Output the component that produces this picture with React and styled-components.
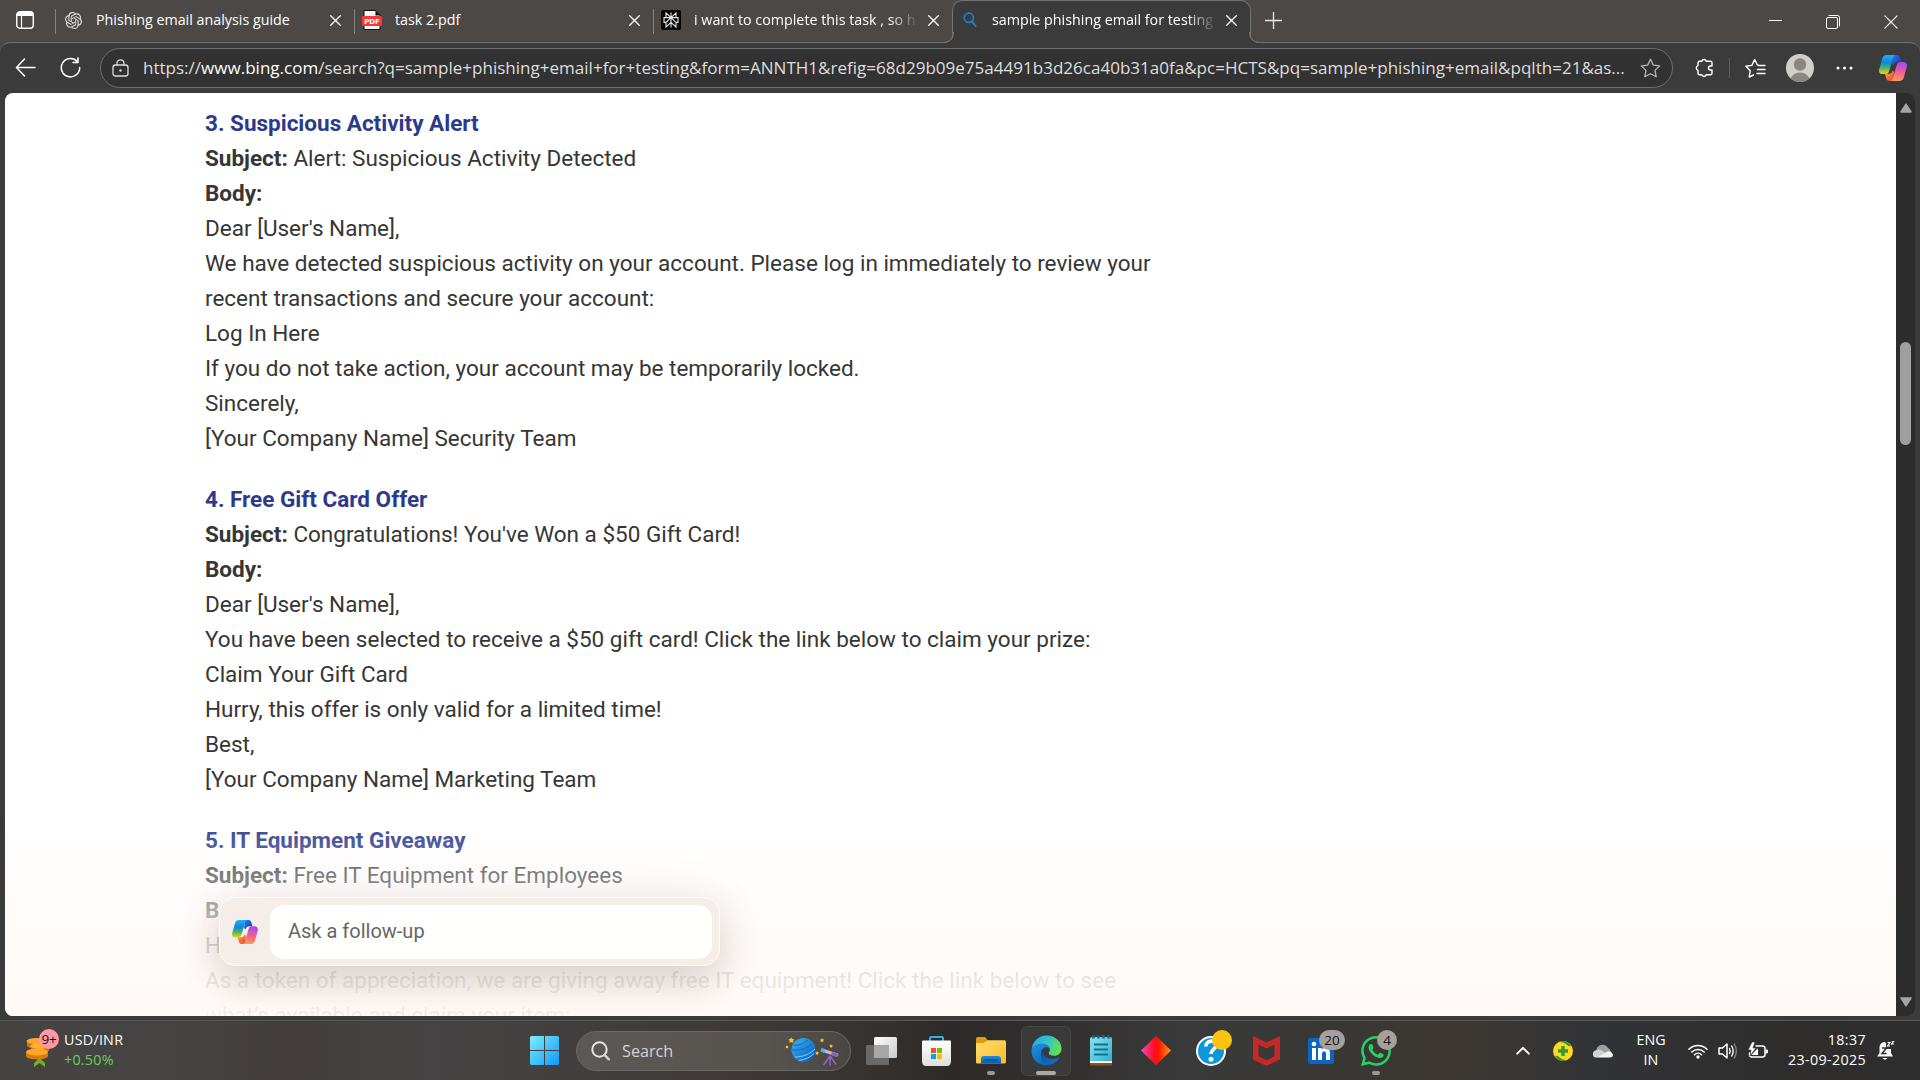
import React from "react";
import styled, { createGlobalStyle, css } from "styled-components";

const ui = `"Open Sans", "Noto Sans", sans-serif`;

const Global = createGlobalStyle`
  * { box-sizing: border-box; }
  html, body { margin: 0; padding: 0; overflow: hidden; background: #3b3b3b; }
  svg { display: block; flex: none; }
`;

/* ---------- window chrome ---------- */
const Screen = styled.div`
  width: 1920px;
  height: 1080px;
  display: flex;
  flex-direction: column;
  overflow: hidden;
  background: #4b4845;
  font-family: ${ui};
  color: #fff;
`;

const TabStrip = styled.div`
  height: 42px;
  flex: none;
  display: flex;
  position: relative;
  z-index: 1;
`;

const TabMenu = styled.div`
  width: 55px;
  display: flex;
  align-items: center;
  padding: 0 0 2px 16px;
`;

const Tab = styled.div`
  width: 299px;
  display: flex;
  align-items: center;
  padding: 0 0 2px 7px;
  position: relative;
  ${(p) =>
    !p.$active &&
    css`
      &::before {
        content: "";
        position: absolute;
        left: 0;
        top: 9px;
        width: 1px;
        height: 25px;
        background: #85827f;
      }
    `}
  ${(p) =>
    p.$active &&
    css`
      height: 43px;
      padding: 0 0 4px 6px;
      background: #3b3b3b;
      border: 1px solid #737373;
      border-bottom: 0;
      border-radius: 10px 10px 0 0;
      &::before,
      &::after {
        content: "";
        position: absolute;
        bottom: 0;
        width: 10px;
        height: 10px;
        background: transparent;
        border-bottom: 1px solid #737373;
      }
      &::before {
        left: -10px;
        border-right: 1px solid #737373;
        border-bottom-right-radius: 10px;
        box-shadow: 4px 3px 0 #3b3b3b;
      }
      &::after {
        right: -10px;
        border-left: 1px solid #737373;
        border-bottom-left-radius: 10px;
        box-shadow: -4px 3px 0 #3b3b3b;
      }
    `}
`;

const Favicon = styled.div`
  width: 22px;
  display: flex;
  justify-content: center;
`;

const TabTitle = styled.div`
  width: 222px;
  margin-left: ${(p) => p.$gap}px;
  font-size: 14.3px;
  line-height: 20px;
  white-space: nowrap;
  overflow: hidden;
  mask-image: ${(p) => (p.$fade ? "linear-gradient(90deg, #000 195px, transparent 225px)" : "none")};
`;

const TabClose = styled.div`
  width: 20px;
  margin-left: 7px;
  display: flex;
  justify-content: center;
`;

const NewTab = styled.div`
  padding: 12px 0 0 14px;
`;

const WindowControls = styled.div`
  margin-left: auto;
  display: flex;
  align-items: center;
  gap: 44px;
  padding: 1px 22px 0 0;
`;

const Toolbar = styled.div`
  height: 51px;
  flex: none;
  display: flex;
  align-items: center;
  padding: 0 13px 1px 15px;
  background: #3b3b3b;
  border-top: 1px solid #737373;
  border-radius: 10px 10px 0 0;
`;

const NavButtons = styled.div`
  width: 85px;
  display: flex;
  align-items: center;
  gap: 24px;
`;

const AddressBar = styled.div`
  width: 1573px;
  height: 40px;
  display: flex;
  align-items: center;
  padding: 0 11px 0 11px;
  border: 1px solid #6e6e6e;
  border-radius: 20px;
  background: #323232;
`;

const Url = styled.div`
  margin-left: 14px;
  flex: 1;
  white-space: nowrap;
  font-size: 17.04px;
  line-height: 24px;
  color: #dedede;
  b { font-weight: 400; color: #fff; }
`;

const ToolbarActions = styled.div`
  margin-left: auto;
  display: flex;
  align-items: center;
`;

const Slot = styled.div`
  margin-left: ${(p) => p.$gap}px;
`;

const Divider = styled.div`
  width: 1px;
  height: 20px;
  margin-left: 15px;
  background: #5e5e5e;
`;

/* ---------- page ---------- */
const Frame = styled.div`
  height: 927px;
  flex: none;
  display: flex;
  padding: 0 5px 4px 5px;
  background: #3b3b3b;
`;

const Page = styled.main`
  width: 1891px;
  position: relative;
  overflow: hidden;
  background: #fff;
  border-radius: 8px 0 0 8px;
  padding: 13px 0 0 200px;
  font-family: Roboto, "Liberation Sans", sans-serif;
`;

const Mail = styled.section`
  margin-bottom: 26px;
  width: 1000px;
`;

const MailTitle = styled.h3`
  margin: 0;
  font-size: 22.5px;
  line-height: 35px;
  font-weight: 700;
  color: #2b3a8c;
`;

const Line = styled.p`
  margin: 0;
  height: 35px;
  font-size: 22.5px;
  line-height: 35px;
  white-space: nowrap;
  color: #363636;
`;

const Fade = styled.div`
  position: absolute;
  left: 0;
  right: 0;
  bottom: 0;
  height: 205px;
  background: linear-gradient(
    180deg,
    rgba(255, 253, 252, 0) 0%,
    rgba(255, 252, 250, 0.15) 14%,
    rgba(255, 252, 250, 0.36) 31%,
    rgba(255, 251, 249, 0.6) 46%,
    rgba(255, 250, 247, 0.78) 62%,
    rgba(255, 250, 247, 0.89) 82%,
    rgba(255, 250, 247, 0.94) 100%
  );
`;

const AskBox = styled.div`
  position: absolute;
  left: 214px;
  top: 804px;
  width: 501px;
  height: 69px;
  display: flex;
  align-items: center;
  padding: 0 7px 0 12px;
  border: 1px solid #fffdfb;
  border-radius: 17px;
  background: #f5eee8;
  box-shadow: 0 16px 38px rgba(60, 35, 25, 0.17), 0 0 56px rgba(60, 40, 20, 0.06);
`;

const AskInput = styled.div`
  flex: 1;
  height: 54px;
  margin-left: 12px;
  padding-left: 18px;
  border-radius: 14px;
  background: #fffffe;
  font-size: 20px;
  line-height: 53px;
  color: #666;
`;

const ScrollTrack = styled.div`
  width: 19px;
  display: flex;
  flex-direction: column;
  align-items: center;
  background: #2c2c2c;
  border-radius: 0 8px 8px 0;
  padding: 10px 0 9px;
`;

const ScrollThumb = styled.div`
  width: 11px;
  height: 103px;
  margin: 229px 0 auto;
  border-radius: 6px;
  background: #9f9f9f;
`;

/* ---------- taskbar ---------- */
const TaskBar = styled.footer`
  height: 60px;
  flex: none;
  display: flex;
  align-items: center;
  border-top: 1px solid #5a5857;
  background: linear-gradient(90deg, #454342 0, #464342 160px, #433e3b 290px, #454343 430px, #3f3a37 720px, #383431 850px, #2e2a29 950px, #302d2c 1030px, #3a3a3a 1180px, #393734 1350px, #3d3833 1450px, #323336 1590px, #2e2d2c 1800px, #2f2e2e 1920px);
`;

const Widget = styled.div`
  width: 519px;
  display: flex;
  align-items: center;
  padding: 0 0 2px 26px;
`;

const WidgetText = styled.div`
  margin-left: 4px;
  font-size: 14.3px;
  line-height: 20px;
  letter-spacing: 0.25px;
  white-space: nowrap;
`;

const Gain = styled.div`
  color: #6ccb5f;
`;

const Apps = styled.div`
  display: flex;
  align-items: center;
  gap: 5px;
`;

const AppButton = styled.div`
  width: 50px;
  height: 50px;
  position: relative;
  display: flex;
  align-items: center;
  justify-content: center;
  border-radius: 6px;
  border: 1px solid ${(p) => (p.$active ? "#484747" : "transparent")};
  background: ${(p) => (p.$active ? "#3b3a3a" : "transparent")};
  ${(p) =>
    p.$running &&
    css`
      &::after {
        content: "";
        position: absolute;
        bottom: 0;
        left: calc(50% - ${p.$running / 2}px);
        width: ${p.$running}px;
        height: 4px;
        border-radius: 2px;
        background: ${p.$running > 10 ? "#a9a8a6" : "#9a9997"};
      }
    `}
`;

const SearchBox = styled.div`
  width: 275px;
  height: 40px;
  margin: 0 0 0 2px;
  display: flex;
  align-items: center;
  padding: 0 9px 0 14px;
  border: 1px solid #6b6765;
  border-radius: 20px;
  background: linear-gradient(90deg, #5c5855, #57534f 70%, #4a4643);
`;

const SearchLabel = styled.div`
  margin-left: 12px;
  flex: 1;
  font-size: 16.2px;
  line-height: 22px;
  color: #d6d3d0;
`;

const Badge = styled.div`
  position: absolute;
  top: 3px;
  left: ${(p) => p.$left}px;
  width: ${(p) => p.$w || 20}px;
  height: 20px;
  border-radius: 10px;
  background: ${(p) => p.$bg || "#a3a09d"};
  color: #111;
  font-size: 13.5px;
  line-height: 20px;
  text-align: center;
`;

const CoinWrap = styled.div`
  position: relative;
  width: 34px;
  height: 38px;
`;

const CoinBadge = styled(Badge)`
  top: -2px;
  left: 13px;
  letter-spacing: -0.3px;
`;

const Tray = styled.div`
  margin-left: auto;
  display: flex;
  align-items: center;
  padding-right: 25px;
`;

const TrayText = styled.div`
  width: ${(p) => p.$w}px;
  margin: 0 0 2px ${(p) => p.$gap}px;
  text-align: ${(p) => p.$align};
  font-size: 14.3px;
  line-height: 20px;
  letter-spacing: ${(p) => p.$ls || 0}px;
  white-space: nowrap;
`;

/* ---------- icons ---------- */
const stroke = { fill: "none", stroke: "#fff", strokeLinecap: "round", strokeLinejoin: "round" };

const CloseX = ({ s = 11, w = 1.3 }) => (
  <svg width={s} height={s} viewBox="0 0 11 11"><path d="M.7.7l9.6 9.6M10.3.7L.7 10.3" {...stroke} strokeWidth={w} /></svg>
);

const OpenAi = () => (
  <svg width="17" height="17" viewBox="0 0 24 24">
    <path fill="#e6e6e6" d="M22.28 9.82a5.98 5.98 0 0 0-.52-4.91 6.05 6.05 0 0 0-6.51-2.9A6.07 6.07 0 0 0 4.98 4.18a5.98 5.98 0 0 0-4 2.9 6.05 6.05 0 0 0 .75 7.1 5.98 5.98 0 0 0 .51 4.91 6.05 6.05 0 0 0 6.52 2.9A5.98 5.98 0 0 0 13.26 24a6.06 6.06 0 0 0 5.77-4.21 5.99 5.99 0 0 0 4-2.9 6.06 6.06 0 0 0-.75-7.07zm-9.02 12.61a4.48 4.48 0 0 1-2.88-1.04l.14-.08 4.78-2.76a.8.8 0 0 0 .39-.68v-6.74l2.02 1.17a.07.07 0 0 1 .04.05v5.58a4.5 4.5 0 0 1-4.49 4.5zm-9.66-4.13a4.47 4.47 0 0 1-.54-3.01l.14.08 4.78 2.76a.77.77 0 0 0 .78 0l5.84-3.37v2.33a.08.08 0 0 1-.03.06L9.74 19.95a4.5 4.5 0 0 1-6.14-1.65zM2.34 7.9a4.49 4.49 0 0 1 2.37-1.98v5.68a.77.77 0 0 0 .39.68l5.81 3.35-2.02 1.17a.08.08 0 0 1-.07 0l-4.83-2.79A4.5 4.5 0 0 1 2.34 7.9zm16.6 3.86L13.1 8.36l2.02-1.16a.08.08 0 0 1 .07 0l4.83 2.79a4.49 4.49 0 0 1-.68 8.1v-5.68a.79.79 0 0 0-.4-.66zm2.01-3.02l-.14-.09-4.77-2.78a.78.78 0 0 0-.79 0L9.41 9.23V6.9a.07.07 0 0 1 .03-.06l4.83-2.79a4.5 4.5 0 0 1 6.68 4.66zM8.31 12.86l-2.02-1.16a.08.08 0 0 1-.04-.06V6.07a4.5 4.5 0 0 1 7.38-3.45l-.14.08-4.78 2.76a.8.8 0 0 0-.39.68zm1.1-2.37l2.6-1.5 2.6 1.5v3l-2.6 1.5-2.6-1.5z" />
  </svg>
);

const PdfIcon = () => (
  <svg width="20" height="20" viewBox="0 0 20 20">
    <path d="M2 .5h12l4 4.5v14.5H2z" fill="#f5f5f5" stroke="#111" />
    <path d="M13.5.5L18 5.5h-4.5z" fill="#111" />
    <rect x="0" y="6" width="20" height="10" rx="1" fill="#f5393b" />
    <text x="10" y="13.6" textAnchor="middle" fontFamily="DejaVu Sans" fontWeight="700" fontSize="7" fill="#fff">PDF</text>
  </svg>
);

const Perplexity = () => (
  <svg width="20" height="20" viewBox="0 0 20 20">
    <rect width="20" height="20" rx="2" fill="#050505" />
    <path d="M10 2.5v15M5 3l5 4.6L15 3v4.6H5zM10 7.6l-5 4.8V17l5-4.6M10 7.6l5 4.8V17l-5-4.6M5 12.4H3V7.6h14v4.8h-2" fill="none" stroke="#e8e8e8" strokeWidth="1.1" />
  </svg>
);

const BlueSearch = () => (
  <svg width="14" height="16" viewBox="0 0 14 16"><circle cx="5.8" cy="5.8" r="4.6" fill="none" stroke="#1c7cd6" strokeWidth="1.7" /><path d="M8.900 9.300l3.700 4.700" stroke="#1c7cd6" strokeWidth="2" strokeLinecap="round" /></svg>
);

const Copilot = ({ w, h, id }) => (
  <svg width={w} height={h} viewBox="0 0 28 26">
    <defs>
      <linearGradient id={`${id}a`} x1="0" y1="0" x2="0" y2="1"><stop offset="0" stopColor="#1fb0f5" /><stop offset=".4" stopColor="#1584dc" /><stop offset=".68" stopColor="#45b56a" /><stop offset="1" stopColor="#ffd400" /></linearGradient>
      <linearGradient id={`${id}b`} x1=".2" y1="0" x2=".1" y2="1"><stop offset="0" stopColor="#a44cf0" /><stop offset=".45" stopColor="#ee5a9c" /><stop offset="1" stopColor="#ffa24a" /></linearGradient>
      <linearGradient id={`${id}c`} x1="0" y1="0" x2="1" y2="1"><stop offset="0" stopColor="#1a7ef0" /><stop offset="1" stopColor="#1b35b8" /></linearGradient>
      <linearGradient id={`${id}d`} x1="0" y1="0" x2="1" y2="1"><stop offset="0" stopColor="#ffb224" /><stop offset="1" stopColor="#e83a4c" /></linearGradient>
    </defs>
    <path d="M14 0h3.500c2.200 0 3 1.300 3.600 3.200l1 3.600h-3.400c-2.400 0-3.400 1.200-4 3.300L13 9z" fill={`url(#${id}c)`} />
    <path d="M14 26h-3.400c-2.200 0-3-1.300-3.600-3.200L6 18.800h4c2.300 0 3-1.400 3.600-3.300L15 17z" fill={`url(#${id}d)`} />
    <path d="M7.600 0h9.200c-1.700.3-2.300 1.700-2.800 3.300l-3.600 12.200c-.7 2.300-1.600 3.600-4 3.600H3.600C.8 19.100-.5 17 .2 14.200L3.100 3.700C3.900 1 5.300 0 7.600 0z" fill={`url(#${id}a)`} />
    <path d="M20.400 26h-9.200c1.700-.3 2.300-1.700 2.800-3.300l3.600-12.200c.7-2.300 1.600-3.600 4-3.600h2.800c2.800 0 4.100 2.100 3.400 4.900l-2.900 10.500c-.8 2.700-2.200 3.700-4.500 3.700z" fill={`url(#${id}b)`} />
  </svg>
);

const Edge = () => (
  <svg width="31" height="31" viewBox="0 0 31 31">
    <defs>
      <linearGradient id="eg1" x1="0" y1=".2" x2="1" y2=".5"><stop offset="0" stopColor="#2aa8e8" /><stop offset=".5" stopColor="#2fc4c9" /><stop offset="1" stopColor="#66e04f" /></linearGradient>
      <linearGradient id="eg2" x1="0" y1="0" x2=".6" y2="1"><stop offset="0" stopColor="#1f93df" /><stop offset="1" stopColor="#0a66bd" /></linearGradient>
      <linearGradient id="eg3" x1="0" y1="0" x2="1" y2="1"><stop offset="0" stopColor="#0b4c94" /><stop offset="1" stopColor="#1179cf" /></linearGradient>
    </defs>
    <path d="M.7 14C1.700 6 8 .5 15.500.5 24 .5 30.500 6.500 30.500 13.500c0 4.600-3.300 7.300-7.200 7.300-3.600 0-5.600-1.400-5.600-2.600 0-.9 1.200-1.300 1.200-3.600 0-3.200-3.300-5.600-7.600-5.600C6.500 9 2.600 11 .7 14z" fill="url(#eg1)" />
    <path d="M.6 15C1.800 11.200 6 8.800 10.800 8.800c4.500 0 7.900 2.500 8 5.500-1-1.600-2.500-2-3.600-2-3 0-5 2.500-5 6.200 0 6 5 9.800 9.300 11-9.800 3.300-20-4-18.900-14.500z" fill="url(#eg2)" />
    <path d="M10.700 16c-1.700 3.600-.7 8.400 2.400 11.300 2.600 2.500 5.400 2.900 7.500 2 3.200-1.100 5.900-3.300 7.600-6 .4-.7-.2-1.100-.8-.8-6.600 3.200-14.400.7-15.400-5-.1-.7-.4-1.700-1.300-1.500z" fill="url(#eg3)" />
  </svg>
);

const Planet = () => (
  <svg width="56" height="30" viewBox="0 0 56 30">
    <defs><linearGradient id="pl" x1="0" y1="0" x2="1" y2="1"><stop offset="0" stopColor="#35b4f5" /><stop offset="1" stopColor="#0a5bb8" /></linearGradient></defs>
    <circle cx="18.500" cy="14" r="12" fill="url(#pl)" />
    <path d="M8 9c5 1 10-1 15-5M7 14c8 1 15-2 20-6" stroke="#1468bd" strokeWidth="1" fill="none" />
    <path d="M10 21c8 0 15-3 20-8M14 24.500c6-1 11-3 15-7" stroke="#7fd0fb" strokeWidth="1" fill="none" />
    <path d="M6 1.500l1.400 1.600 2 .2-1.300 1.500.4 2.100L6.400 6l-2 .9.300-2.100L3.400 3.200l1.900-.2zM37 2l.8 1.300 1.500.5-1.200 1 .1 1.600-1.300-.8-1.500.6.4-1.500-1-1.200 1.600-.1zM32 15l.9 1.300 1.200.3-.9 1-.1 1.400-1.200-.7-1.300.5.3-1.400-.7-1 1.300-.1zM46 8l.7 1.200 1.300.4-.9.9v1.400l-1.200-.8-1.200.4.400-1.300-.8-1 1.200-.1z" fill="#f9c623" />
    <circle cx="2" cy="11" r="1.300" fill="#f9c623" />
    <path d="M37.500 12.500l16 5.300-1.300 3.200-15.700-5.600z" fill="#c3b2d8" /><path d="M36.500 12l4 1.400-1.200 3.500-3.800-1.400z" fill="#4db4ee" /><path d="M47 16l6 2-1 3-6-2z" fill="#8264b8" />
    <path d="M45 20l-6.500 9M45 20v9.500M45 20l6 8.500" stroke="#9268c8" strokeWidth="1.400" />
  </svg>
);

const Ico = {
  tabs: <svg width="18" height="18" viewBox="0 0 18 18"><rect x=".75" y=".75" width="16.500" height="16.500" rx="3" {...stroke} strokeWidth="1.400" /><path d="M1 3.500C1 1.500 2 1 3.500 1h11C16 1 17 1.500 17 3.500V5H1z" fill="#fff" /><path d="M5.500 5v12" stroke="#fff" strokeWidth="1.200" /></svg>,
  back: <svg width="21" height="19" viewBox="0 0 21 19"><path d="M9.500 1L1.500 9.500l8 8.500M1.500 9.500H20" {...stroke} strokeWidth="1.500" /></svg>,
  reload: <svg width="21" height="21" viewBox="0 0 21 21"><path d="M17.300 4.500A9.200 9.200 0 1 0 19.700 10.500M18 .8v4.700h-5" {...stroke} strokeWidth="1.500" /></svg>,
  lock: <svg width="17" height="18" viewBox="0 0 17 18"><rect x="1" y="6" width="15" height="11" rx="2.500" {...stroke} stroke="#ddd" strokeWidth="1.300" /><path d="M5 6V4.300a3.500 3.500 0 0 1 7 0V6" {...stroke} stroke="#ddd" strokeWidth="1.300" /><circle cx="8.500" cy="11.500" r="1.200" fill="#ddd" /></svg>,
  star: <svg width="21" height="20" viewBox="0 0 21 20"><path d="M10.500 1.200l2.800 5.900 6.400.8-4.700 4.500 1.200 6.400-5.700-3.100-5.700 3.100L6 12.400 1.300 7.900l6.400-.8z" {...stroke} stroke="#b5b5b5" strokeWidth="1.300" /></svg>,
  puzzle: <svg width="20" height="20" viewBox="0 0 20 20"><path d="M5.500 3.200h2.300a2.300 2.300 0 0 1 4.400 0h4.300q1.500 0 1.500 1.500V8h-1.500a2 2 0 0 0 0 4H18v3.300q0 1.500-1.500 1.500h-4.300a2.300 2.300 0 0 1-4.400 0H5.500q-1.500 0-1.500-1.500v-3a2.400 2.400 0 0 1 0-4.600v-3q0-1.500 1.500-1.500z" {...stroke} strokeWidth="1.400" /></svg>,
  favs: <svg width="21" height="20" viewBox="0 0 21 20"><path d="M8.500 17l-4.300 2 1-6.300L.9 8.300l6-.9L9.600 1.500l2.700 5.300L14 7.500H20M12.500 11.500H20M12 15.500h8" {...stroke} strokeWidth="1.400" /></svg>,
  avatar: <svg width="28" height="28" viewBox="0 0 28 28"><defs><clipPath id="av"><circle cx="14" cy="14" r="14" /></clipPath></defs><g clipPath="url(#av)"><rect width="28" height="28" fill="#d1cfcc" /><circle cx="14" cy="10.500" r="6.200" fill="#8b8682" /><ellipse cx="14" cy="26" rx="9.500" ry="7.500" fill="#8b8682" /></g></svg>,
  dots: <svg width="17" height="4" viewBox="0 0 17 4"><circle cx="2" cy="2" r="1.500" fill="#fff" /><circle cx="8.500" cy="2" r="1.500" fill="#fff" /><circle cx="15" cy="2" r="1.500" fill="#fff" /></svg>,
  plus: <svg width="17" height="17" viewBox="0 0 17 17"><path d="M8.500 0v17M0 8.500h17" stroke="#e8e8e8" strokeWidth="1.300" /></svg>,
  min: <svg width="13" height="13" viewBox="0 0 13 13"><path d="M0 5.500h13" stroke="#fff" /></svg>,
  max: <svg width="14" height="14" viewBox="0 0 14 14"><rect x=".5" y="2.500" width="11" height="11" rx="1.500" {...stroke} /><path d="M3 .5h8.500q2 0 2 2V11" {...stroke} /></svg>,
  up: <svg width="12" height="10" viewBox="0 0 12 10"><path d="M6 1.200L11 9H1z" fill="#a4a4a4" stroke="#a4a4a4" strokeWidth="1.500" strokeLinejoin="round" /></svg>,
  down: <svg width="12" height="10" viewBox="0 0 12 10"><path d="M6 8.800L1 1h10z" fill="#a4a4a4" stroke="#a4a4a4" strokeWidth="1.500" strokeLinejoin="round" /></svg>,
  start: <svg width="29" height="29" viewBox="0 0 29 29"><defs><linearGradient id="st" gradientUnits="userSpaceOnUse" x1="0" y1="0" x2="29" y2="29"><stop offset="0" stopColor="#7deefc" /><stop offset="1" stopColor="#0f98fb" /></linearGradient></defs><path d="M1 0h13v14H0V1zM15 0h13l1 1v13H15zM0 15h14v14H1l-1-1zM15 15h14v13l-1 1H15z" fill="url(#st)" /></svg>,
  search: <svg width="19" height="20" viewBox="0 0 19 20"><circle cx="8.500" cy="8.500" r="7.200" fill="none" stroke="#e4e4e4" strokeWidth="2" /><path d="M13.500 13.800l4.300 4.500" stroke="#d5d5d5" strokeWidth="2.400" strokeLinecap="round" /></svg>,
  task: <svg width="31" height="28" viewBox="0 0 31 28"><defs><linearGradient id="tv" x1="0" y1="0" x2="1" y2="1"><stop offset="0" stopColor="#fff" /><stop offset="1" stopColor="#c9c9c9" /></linearGradient></defs><rect x="8" y="0" width="23" height="21" rx="1.500" fill="url(#tv)" /><rect x="0" y="8" width="23" height="20" rx="1.500" fill="#747474" opacity=".85" /><rect x="8" y="8" width="15" height="13" fill="#a7a7a7" /></svg>,
  store: <svg width="29" height="30" viewBox="0 0 29 30"><defs><linearGradient id="so" x1="0" y1="0" x2="0" y2="1"><stop offset="0" stopColor="#fff" /><stop offset="1" stopColor="#dedede" /></linearGradient></defs><path d="M8 6V2q0-1 1-1h11q1 0 1 1v4" fill="none" stroke="#2bb3ea" strokeWidth="2" /><path d="M0 5.500q0-1 1-1h27q1 0 1 1V25q0 5-4 5H4q-4 0-4-5z" fill="url(#so)" /><path d="M9 12h5v5H9z" fill="#f25022" /><path d="M15 12h5v5h-5z" fill="#7fba00" /><path d="M9 18h5v5H9z" fill="#00a4ef" /><path d="M15 18h5v5h-5z" fill="#ffb900" /></svg>,
  folder: <svg width="30" height="27" viewBox="0 0 30 27"><defs><linearGradient id="fo" x1="0" y1="0" x2="1" y2="1"><stop offset="0" stopColor="#ffdc73" /><stop offset="1" stopColor="#fcbd24" /></linearGradient><linearGradient id="fb" x1="0" y1="0" x2="0" y2="1"><stop offset="0" stopColor="#1b8ddd" /><stop offset="1" stopColor="#0b5cab" /></linearGradient></defs><path d="M0 1.500Q0 0 1.500 0H9l3 3.500V9H0z" fill="#e09c0b" /><path d="M0 6q4 0 7.500 0L12 3.200h16.500q1.500 0 1.500 1.500V25q0 1.500-1.500 1.500h-27Q0 26.500 0 25z" fill="url(#fo)" /><path d="M5 26.500V22q0-3 3-3h14q3 0 3 3v4.500z" fill="url(#fb)" /><path d="M8.500 23h13" stroke="#0a4a8c" strokeWidth="1.300" /></svg>,
  note: <svg width="22" height="31" viewBox="0 0 22 31"><defs><linearGradient id="no" x1="0" y1="0" x2="1" y2="1"><stop offset="0" stopColor="#8ae2f0" /><stop offset="1" stopColor="#35b0cd" /></linearGradient></defs><path d="M0 27h22v2.500q0 1-1 1H1q-1 0-1-1z" fill="#9a4d15" /><path d="M0 25h22v3H0z" fill="#f5f5f5" /><path d="M0 4q0-2 2-2h18q2 0 2 2v22H0z" fill="url(#no)" /><path d="M3.500 0v3.500M8.500 0v3.500M13.500 0v3.500M18.500 0v3.500" stroke="#116c85" strokeWidth="2.600" /><path d="M4 9.500h14M4 14.500h14M4 19.500h14" stroke="#0e7391" strokeWidth="1.800" /></svg>,
  diamond: <svg width="30" height="29" viewBox="0 0 30 29"><defs><linearGradient id="di"><stop offset="0" stopColor="#ef4fc8" /><stop offset=".45" stopColor="#ff0b1c" /><stop offset=".6" stopColor="#ff1a00" /><stop offset="1" stopColor="#ff9d1a" /></linearGradient></defs><path d="M15 0l15 14.500L15 29 0 14.500z" fill="url(#di)" /></svg>,
  help: <svg width="30" height="30" viewBox="0 0 30 30"><circle cx="15" cy="15" r="14" fill="#0b97dc" stroke="#fff" strokeWidth="2" /><path d="M9.800 10.500c.3-7.500 11-6.500 10.200-.8-.5 3.500-5 4-5 8.300" fill="none" stroke="#fff" strokeWidth="3.600" /><circle cx="15" cy="23.200" r="2.500" fill="#fff" /></svg>,
  mcafee: <svg width="27" height="30" viewBox="0 0 27 30"><path d="M0 0l13.500 6.500L27 0v23.500L13.500 30 0 23.500zM5.500 8.500v11.800l8 4 8-4V8.500l-8 4z" fill="#c62828" fillRule="evenodd" /></svg>,
  linkedin: <svg width="26" height="26" viewBox="0 0 26 26"><rect width="26" height="26" rx="2" fill="#0a66c2" /><path d="M4 10h4v12H4zM10 10h3.700v1.700c2-3.200 8.300-2.600 8.300 3.200V22h-4v-6.300c0-3.500-4-3.200-4 0V22h-4z" fill="#fff" /><circle cx="6" cy="6" r="2.300" fill="#fff" /></svg>,
  whatsapp: <svg width="30" height="30" viewBox="0 0 24 24"><path fill="#25d366" d="M17.470 14.380c-.3-.15-1.760-.87-2.030-.97-.27-.1-.47-.15-.67.15-.2.3-.77.970-.94 1.160-.17.2-.35.220-.64.080-.3-.15-1.260-.46-2.390-1.480-.88-.79-1.480-1.760-1.650-2.060-.17-.3-.02-.46.130-.6.130-.14.300-.35.440-.53.150-.17.200-.3.300-.49.100-.2.050-.37-.03-.52-.07-.15-.66-1.610-.91-2.200-.24-.58-.49-.5-.67-.51l-.57-.01c-.2 0-.52.070-.79.370-.27.300-1.040 1.020-1.040 2.480s1.070 2.880 1.210 3.070c.15.200 2.100 3.200 5.080 4.490.71.300 1.260.49 1.690.62.710.23 1.360.2 1.870.12.570-.08 1.760-.72 2.010-1.410.25-.7.250-1.290.17-1.410-.07-.13-.27-.2-.57-.35m-5.420 7.400h-.004a9.870 9.870 0 0 1-5.030-1.380l-.36-.21-3.740.98 1-3.650-.24-.37a9.860 9.860 0 0 1-1.510-5.260c0-5.450 4.440-9.880 9.890-9.880 2.640 0 5.120 1.030 6.990 2.900a9.830 9.830 0 0 1 2.890 6.990c0 5.450-4.440 9.880-9.880 9.880m8.410-18.300A11.820 11.820 0 0 0 12.050 0C5.500 0 .16 5.340.16 11.890c0 2.100.55 4.140 1.590 5.950L.06 24l6.310-1.650a11.880 11.880 0 0 0 5.680 1.450c6.560 0 11.890-5.340 11.890-11.890a11.820 11.820 0 0 0-3.480-8.410z" /></svg>,
  coins: <svg width="26" height="38" viewBox="0 0 26 38"><g><path d="M1 10.500v4c0 4 18 4 18 0v-4z" fill="#d97b0c" /><ellipse cx="10" cy="10" rx="9.500" ry="3" fill="#ffa52b" /><path d="M5 15v4c0 4 18 4 18 0v-4z" fill="#d6760a" /><ellipse cx="14" cy="15" rx="9.500" ry="3" fill="#ffae35" /><path d="M0 21.500v3.500c0 4.500 22 4.500 22 0v-3.500z" fill="#d97b0c" /><ellipse cx="11" cy="21" rx="11" ry="3.500" fill="#ffa726" /></g><path d="M8 36v-4l5.500-5 5.500 5v4l-5.500-4z" fill="#6fb31c" /></svg>,
  chevron: <svg width="14" height="9" viewBox="0 0 14 9"><path d="M1.200 7.700L7 1.800l5.800 5.900" {...stroke} strokeWidth="1.900" /></svg>,
  shield: <svg width="20" height="20" viewBox="0 0 20 20"><circle cx="10" cy="10" r="10" fill="#ffd91c" /><path d="M6 1Q13-2 18 5q-2 1-4-1-3-3-8-3zM14 19Q7 22 2 15q2-1 4 1 3 3 8 3z" fill="#2f9a2d" /><path d="M8.300 5h3.400v3.300H15v3.400h-3.300V15H8.300v-3.300H5V8.300h3.300z" fill="#2f9a2d" /></svg>,
  cloud: <svg width="20" height="14" viewBox="0 0 20 14"><path d="M4 10a5.700 5.700 0 0 1 11-6 4 4 0 0 1 2 6z" fill="#a0a0a0" /><path d="M3.500 13.500a3.500 3.500 0 0 1 0-7Q6 5 9 7l3 2q5-4 8 1.500 0 3-3 3z" fill="#f4f4f4" /><path d="M3.500 6.500Q7 4.500 10 7.500l2.500 1.600L5 13H3a3.300 3.300 0 0 1 .5-6.500z" fill="#d2d2d2" /></svg>,
  wifi: <svg width="20" height="16" viewBox="0 0 20 16"><path d="M1 6.200a12.700 12.700 0 0 1 18 0M3.800 9a8.800 8.800 0 0 1 12.400 0M6.500 11.700a5 5 0 0 1 7 0" {...stroke} strokeWidth="1.600" /><circle cx="10" cy="14" r="1.700" fill="#fff" /></svg>,
  volume: <svg width="20" height="18" viewBox="0 0 20 18"><path d="M1 6h3.500L9 2v14l-4.500-4H1z" {...stroke} strokeWidth="1.500" /><path d="M11.500 6.500q1.500 2.500 0 5M13.700 4q3 5 0 10" {...stroke} strokeWidth="1.400" /><path d="M16.300 2q4 7 0 14" {...stroke} stroke="#858585" strokeWidth="1.400" /></svg>,
  battery: <svg width="20" height="18" viewBox="0 0 20 18"><path d="M8 4h6.500q2.500 0 2.500 2.500v6q0 2.500-2.500 2.500H4q-2.500 0-2.500-2.500V11" {...stroke} strokeWidth="1.500" /><path d="M10 6.500v6.500H3.500L9 7zM17.500 7.500h1q1.500 0 1.500 1v2q0 1-1.500 1h-1z" fill="#fff" /><path d="M4 0L0 8h3l-1 6 6-8H5l2-6z" fill="#fff" stroke="#303032" strokeWidth=".6" /></svg>,
  bell: <svg width="18" height="20" viewBox="0 0 18 20"><path d="M8 1C4 1 2.500 4 2.500 7v5L0 15.500h16L14 12V8L8 1z" fill="#f5f5f5" /><path d="M5.500 17h5q-2.500 3.500-5 0z" fill="#f5f5f5" /><path d="M9 0h9v8H9z" fill="#303031" /><path d="M10.500 1.500h2.500l-2.500 3.500H13M14.500 0H17l-2.500 3H17" stroke="#fff" strokeWidth="1.100" fill="none" /><path d="M5 7h4.500L5 12.500h4.500" stroke="#303031" strokeWidth="1.500" fill="none" /></svg>,
};

/* ---------- content ---------- */
const mails = [
  { title: "3. Suspicious Activity Alert", subject: "Alert: Suspicious Activity Detected", body: ["Dear [User's Name],", "We have detected suspicious activity on your account. Please log in immediately to review your", "recent transactions and secure your account:", "Log In Here", "If you do not take action, your account may be temporarily locked.", "Sincerely,", "[Your Company Name] Security Team"] },
  { title: "4. Free Gift Card Offer", subject: "Congratulations! You've Won a $50 Gift Card!", body: ["Dear [User's Name],", "You have been selected to receive a $50 gift card! Click the link below to claim your prize:", "Claim Your Gift Card", "Hurry, this offer is only valid for a limited time!", "Best,", "[Your Company Name] Marketing Team"] },
  { title: "5. IT Equipment Giveaway", subject: "Free IT Equipment for Employees", body: ["Hi,", "As a token of appreciation, we are giving away free IT equipment! Click the link below to see", "what’s available and claim your item:"] },
];

const tabs = [
  { icon: <OpenAi />, title: "Phishing email analysis guide", gap: 12 },
  { icon: <PdfIcon />, title: "task 2.pdf", gap: 12 },
  { icon: <Perplexity />, title: "i want to complete this task , so help me", gap: 12, fade: true },
  { icon: <BlueSearch />, title: "sample phishing email for testing", gap: 11, fade: true, active: true },
];

const apps = [
  { icon: Ico.task }, { icon: Ico.store }, { icon: Ico.folder, running: 8 },
  { icon: <Edge />, running: 20, active: true }, { icon: Ico.note }, { icon: Ico.diamond },
  { icon: Ico.help, badge: { $left: 25, $bg: "#ffc20e" } }, { icon: Ico.mcafee },
  { icon: Ico.linkedin, badge: { $left: 22, $w: 26 }, count: "20" },
  { icon: Ico.whatsapp, running: 8, badge: { $left: 25 }, count: "4" },
];

export default function App() {
  return (
    <Screen>
      <Global />
      <TabStrip>
        <TabMenu>{Ico.tabs}</TabMenu>
        {tabs.map((t) => (
          <Tab key={t.title} $active={t.active}>
            <Favicon>{t.icon}</Favicon>
            <TabTitle $gap={t.gap} $fade={t.fade}>{t.title}</TabTitle>
            <TabClose><CloseX /></TabClose>
          </Tab>
        ))}
        <NewTab>{Ico.plus}</NewTab>
        <WindowControls>{Ico.min}{Ico.max}<CloseX s={14} w={0.9} /></WindowControls>
      </TabStrip>
      <Toolbar>
        <NavButtons>{Ico.back}{Ico.reload}</NavButtons>
        <AddressBar>
          {Ico.lock}
          <Url>https://<b>www.bing.com</b>/search?q=sample+phishing+email+for+testing&amp;form=ANNTH1&amp;refig=68d29b09e75a4491b3d26ca40b31a0fa&amp;pc=HCTS&amp;pq=sample+phishing+email&amp;pqlth=21&amp;as...</Url>
          {Ico.star}
        </AddressBar>
        <ToolbarActions>
          {Ico.puzzle}
          <Divider />
          <Slot $gap={15}>{Ico.favs}</Slot>
          <Slot $gap={20}>{Ico.avatar}</Slot>
          <Slot $gap={22}>{Ico.dots}</Slot>
          <Slot $gap={26}><Copilot w={28} h={26} id="ct" /></Slot>
        </ToolbarActions>
      </Toolbar>
      <Frame>
        <Page>
          {mails.map((m) => (
            <Mail key={m.title}>
              <MailTitle>{m.title}</MailTitle>
              <Line><b>Subject:</b> {m.subject}</Line>
              <Line><b>Body:</b></Line>
              {m.body.map((l) => <Line key={l}>{l}</Line>)}
            </Mail>
          ))}
          <Fade />
          <AskBox>
            <Copilot w={26} h={24} id="cb" />
            <AskInput>Ask a follow-up</AskInput>
          </AskBox>
        </Page>
        <ScrollTrack>{Ico.up}<ScrollThumb />{Ico.down}</ScrollTrack>
      </Frame>
      <TaskBar>
        <Widget>
          <CoinWrap>{Ico.coins}<CoinBadge $bg="#ff99a4">9+</CoinBadge></CoinWrap>
          <WidgetText>USD/INR<Gain>+0.50%</Gain></WidgetText>
        </Widget>
        <Apps>
          <AppButton>{Ico.start}</AppButton>
          <SearchBox>{Ico.search}<SearchLabel>Search</SearchLabel><Planet /></SearchBox>
          {apps.map((a, i) => (
            <AppButton key={i} $running={a.running} $active={a.active}>
              {a.icon}
              {a.badge && <Badge {...a.badge}>{a.count}</Badge>}
            </AppButton>
          ))}
        </Apps>
        <Tray>
          {Ico.chevron}
          <Slot $gap={23}>{Ico.shield}</Slot>
          <Slot $gap={20}>{Ico.cloud}</Slot>
          <TrayText $w={40} $gap={18} $align="center">ENG<br />IN</TrayText>
          <Slot $gap={17}>{Ico.wifi}</Slot>
          <Slot $gap={10}>{Ico.volume}</Slot>
          <Slot $gap={10}>{Ico.battery}</Slot>
          <TrayText $w={90} $gap={8} $align="right" $ls={0.35}>18:37<br />23-09-2025</TrayText>
          <Slot $gap={11}>{Ico.bell}</Slot>
        </Tray>
      </TaskBar>
    </Screen>
  );
}
